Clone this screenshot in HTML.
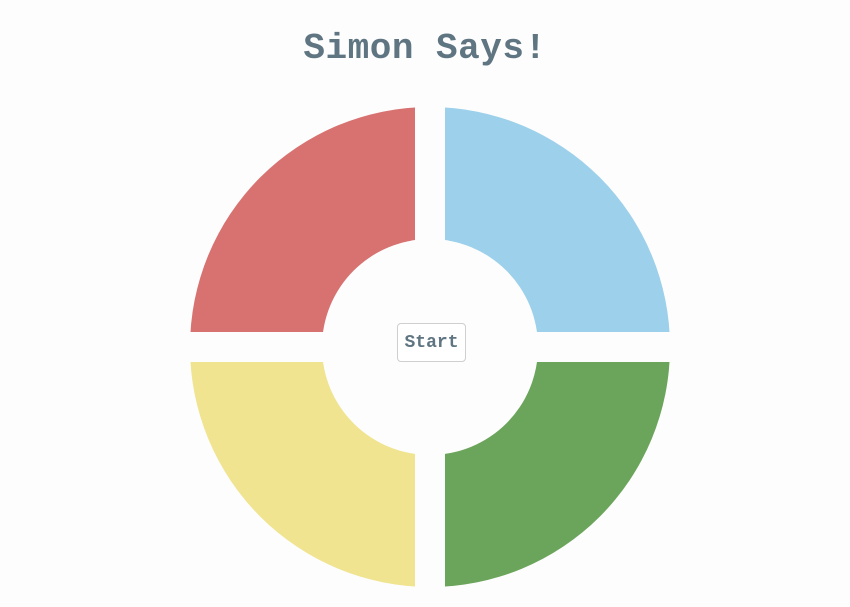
<!DOCTYPE html>
<html><head><style>
html,body{margin:0;padding:0;background:#fdfdfd;width:850px;height:607px;overflow:hidden}
h1{position:absolute;left:0;width:850px;top:24px;margin:0;text-align:center;font:bold 36px/50px "Liberation Mono",monospace;color:#5f7582;letter-spacing:0.5px}
svg{position:absolute;left:0;top:0}
button{position:absolute;left:397px;top:323px;width:69px;height:39px;background:#fff;border:1px solid #cfcfcf;border-radius:4px;font:bold 18px "Liberation Mono",monospace;color:#5f7582;padding:0}
</style></head><body>
<h1>Simon Says!</h1>
<svg width="850" height="607">
<path d="M430 347 L430 107 A240 240 0 0 0 190 347 Z" fill="#d77271"/>
<path d="M430 347 L430 107 A240 240 0 0 1 670 347 Z" fill="#9dd0ea"/>
<path d="M430 347 L190 347 A240 240 0 0 0 430 587 Z" fill="#f0e491"/>
<path d="M430 347 L670 347 A240 240 0 0 1 430 587 Z" fill="#6ba55b"/>
<rect x="415" y="90" width="30" height="510" fill="#fdfdfd"/>
<rect x="170" y="332" width="520" height="30" fill="#fdfdfd"/>
<circle cx="430" cy="347" r="108" fill="#fdfdfd"/>
</svg>
<button>Start</button>
</body></html>
